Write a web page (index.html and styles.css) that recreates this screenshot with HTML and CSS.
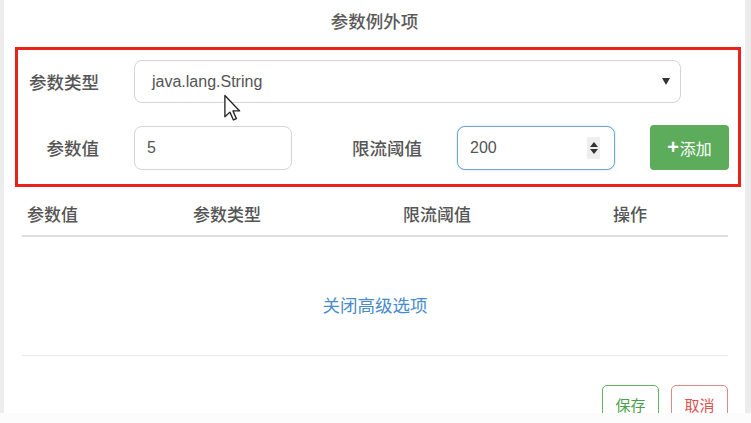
FILE: index.html
```html
<!DOCTYPE html>
<html lang="zh">
<head>
<meta charset="utf-8">
<title>参数例外项</title>
<link rel="stylesheet" href="styles.css">
</head>
<body>
<div class="page">
  <div class="panel">
    <div class="title">参数例外项</div>
    <div class="hl-box">
      <div class="row row-type">
        <label class="lbl">参数类型</label>
        <div class="control select">
          <span class="val">java.lang.String</span>
          <span class="caret"></span>
        </div>
      </div>
      <div class="row row-value">
        <label class="lbl">参数值</label>
        <div class="control short"><span class="val">5</span></div>
        <label class="lbl lbl2">限流阈值</label>
        <div class="control short focus">
          <span class="val">200</span>
          <span class="spin"><i class="up"></i><i class="down"></i></span>
        </div>
        <button class="btn-add"><span class="plus">+</span>添加</button>
      </div>
    </div>
    <div class="thead">
      <div>参数值</div>
      <div>参数类型</div>
      <div>限流阈值</div>
      <div>操作</div>
    </div>
    <div class="toggle"><a class="link">关闭高级选项</a></div>
    <div class="footer">
      <button class="btn-o green">保存</button>
      <button class="btn-o red">取消</button>
    </div>
    <svg class="cursor" width="20" height="28" viewBox="0 0 13 19">
      <path d="M1 1 L1 15.5 L4.4 12.3 L6.8 17.6 L8.8 16.7 L6.5 11.5 L11 11.5 Z" fill="#fff" stroke="#222" stroke-width="0.9" stroke-linejoin="round"/>
    </svg>
  </div>
</div>
</body>
</html>
```

FILE: styles.css
```css
* { box-sizing: border-box; }
html, body { margin: 0; padding: 0; }
body {
  width: 751px;
  height: 423px;
  overflow: hidden;
  background: #fcfcfc;
  font-family: "Liberation Sans", "Noto Sans CJK SC", sans-serif;
  color: #555;
}
.page {
  display: flex;
  padding: 0 6px 0 4px;
  background: #ececec;
  height: 413px;
}
.panel {
  position: relative;
  flex: 1;
  background: #fff;
  height: 413px;
  overflow: hidden;
}
.title {
  text-align: center;
  font-size: 17.5px;
  line-height: 24px;
  padding-top: 10px;
  height: 47px;
  color: #5a5a5a;
  font-weight: 500;
}
.hl-box {
  margin: 0 4px 0 11px;
  border: 3px solid #e9221a;
  height: 140px;
  padding: 10px 9px 0 0;
}
.row { display: flex; align-items: center; }
.row-value { margin-top: 22px; }
.lbl {
  width: 81px;
  text-align: right;
  margin-right: 35px;
  font-size: 17.5px;
  color: #555;
  font-weight: 500;
}
.lbl2 { width: 130px; margin-right: 35px; }
.control {
  display: flex;
  align-items: center;
  border: 1px solid #d4d4d4;
  border-radius: 8px;
  padding: 0 17px;
  font-size: 16px;
  color: #555;
  background: #fff;
}
.select { width: 547px; height: 43px; justify-content: space-between; padding-right: 10px; }
.caret {
  width: 0; height: 0;
  border-left: 4px solid transparent;
  border-right: 4px solid transparent;
  border-top: 7px solid #333;
}
.short { width: 158px; height: 44px; padding: 0 12px; }
.focus {
  border-color: #6fa6d6;
  justify-content: space-between;
  box-shadow: 0 0 2px rgba(102,175,233,0.5);
  padding-right: 14px;
}
.spin {
  display: flex;
  flex-direction: column;
  align-items: center;
  justify-content: center;
  gap: 2px;
  width: 13px;
  height: 22px;
  background: #eee;
}
.spin i { width: 0; height: 0; border-left: 4px solid transparent; border-right: 4px solid transparent; }
.spin .up { border-bottom: 5px solid #333; }
.spin .down { border-top: 5px solid #333; }
.btn-add {
  margin-left: 35px;
  width: 79px;
  height: 45px;
  border: none;
  border-radius: 4px;
  background: #5cac5c;
  color: #fff;
  font-family: inherit;
  font-size: 16px;
  display: flex;
  align-items: center;
  justify-content: center;
  padding: 0;
}
.plus { font-weight: bold; font-size: 20px; margin-right: 1px; }
.thead {
  display: grid;
  grid-template-columns: 166px 210px 210px 1fr;
  margin: 0 17px 0 18px;
  padding: 14px 0 0 5px;
  height: 50px;
  border-bottom: 2px solid #ddd;
  font-size: 17px;
  font-weight: 500;
  color: #555;
}
.toggle {
  height: 119px;
  display: flex;
  align-items: center;
  justify-content: center;
  margin: 0 17px 0 18px;
  border-bottom: 1px solid #e8e8e8;
  padding-top: 16px;
}
.link { color: #4a8bcb; font-size: 17.5px; }
.footer {
  display: flex;
  justify-content: flex-end;
  gap: 12px;
  margin: 29px 17px 0 0;
}
.btn-o {
  width: 57px;
  height: 36px;
  background: #fff;
  border: 1px solid;
  border-radius: 5px;
  font-family: inherit;
  font-size: 15px;
  padding: 2px 0 0;
}
.green { border-color: #5db55d; color: #4c9d4c; }
.red { border-color: #e08a88; color: #d9534f; }
.cursor { position: absolute; left: 219px; top: 94px; }
```
